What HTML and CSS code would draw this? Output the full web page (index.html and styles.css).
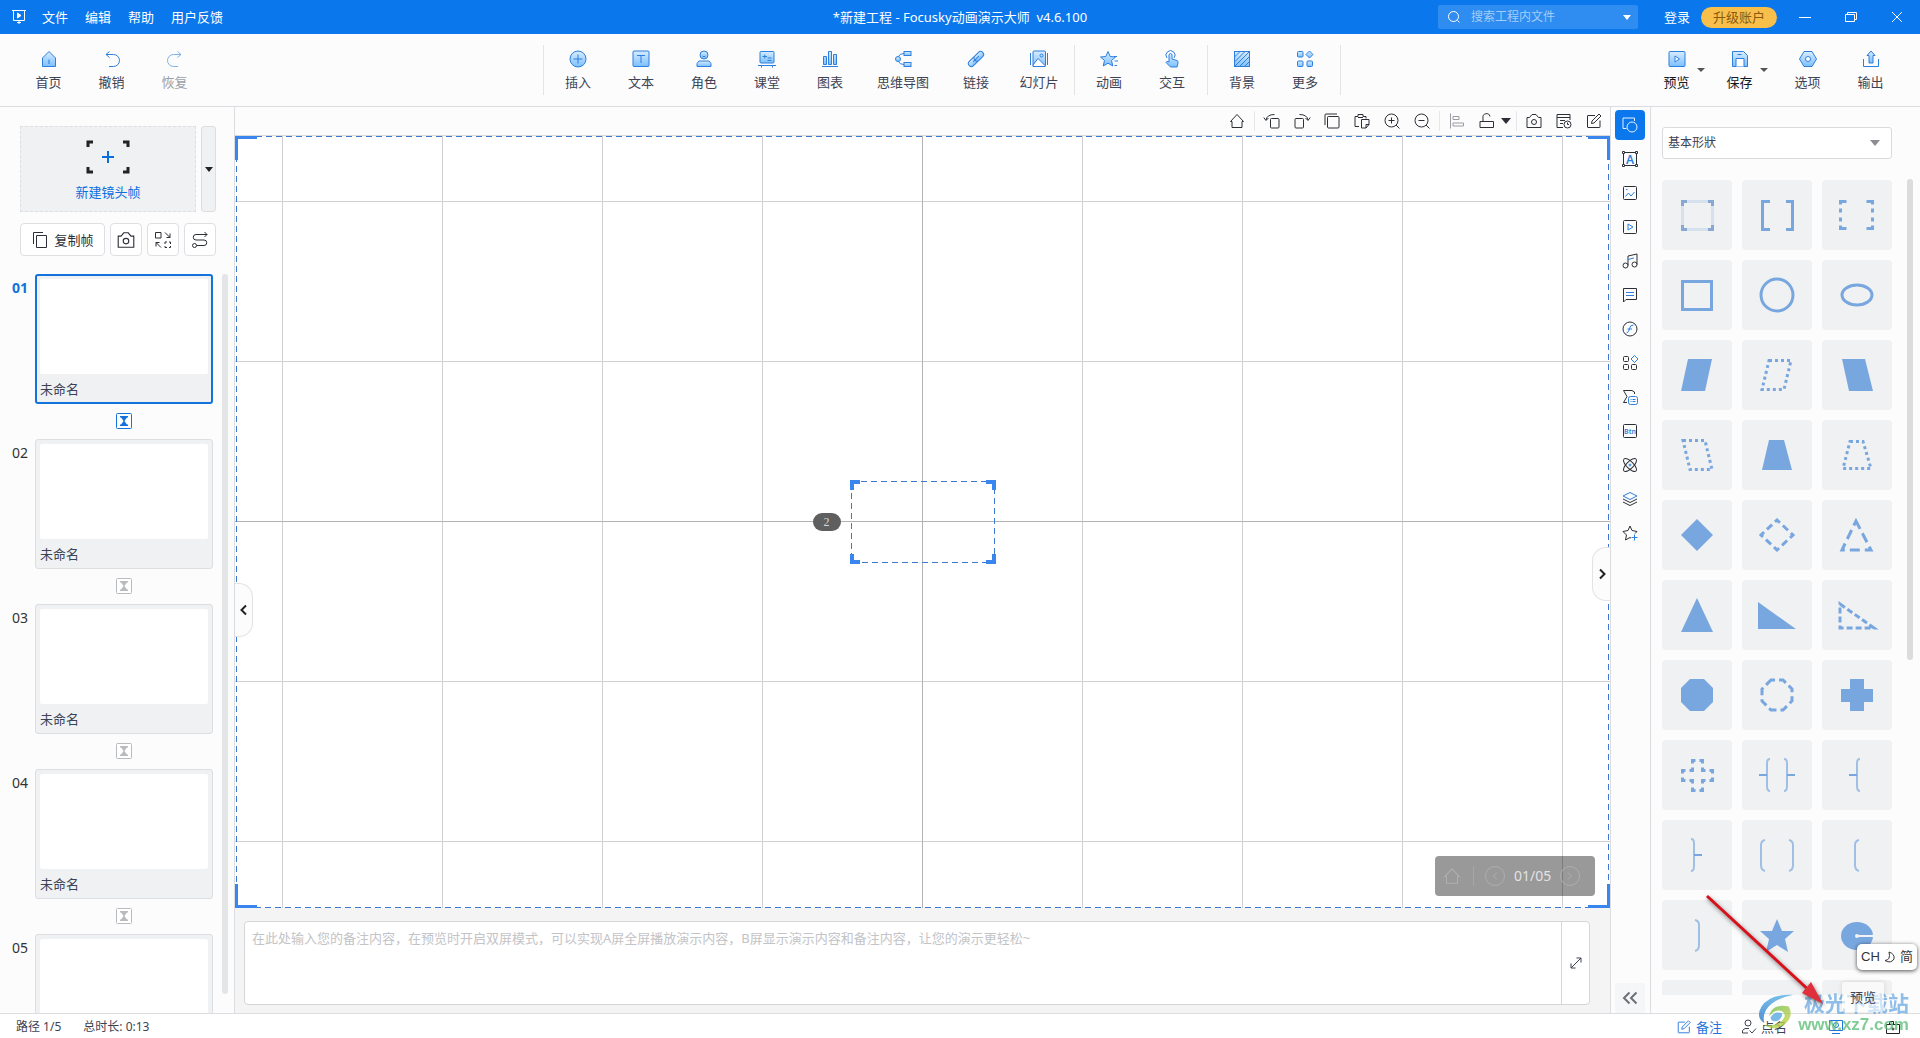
FILE: index.html
```html
<!DOCTYPE html>
<html lang="zh-CN">
<head>
<meta charset="utf-8">
<title>新建工程 - Focusky动画演示大师</title>
<link rel="stylesheet" href="styles.css">
</head>
<body>
<svg class="sprite" aria-hidden="true">
  <defs>
    <linearGradient id="g" x1="0" y1="0" x2="0" y2="1"><stop offset="0" stop-color="#d8ecff"/><stop offset="1" stop-color="#7cc0ff"/></linearGradient>
    <linearGradient id="wm" x1="0" y1="0" x2="0" y2="1"><stop offset="0" stop-color="#56b0e8"/><stop offset="1" stop-color="#2b74c4"/></linearGradient>
    <linearGradient id="wg" x1="0" y1="0" x2="1" y2="1"><stop offset="0" stop-color="#62bd4f"/><stop offset="1" stop-color="#d8d94a"/></linearGradient>
  </defs>
  <symbol id="camera" viewBox="0 0 18 18"><path d="M2 5.500H4.500L7 2.500H11L13.500 5.500H16V15.500H2Z"/><circle cx="9" cy="10" r="2.500"/></symbol>
  <symbol id="house" viewBox="0 0 18 18"><path d="M2.500 9.500H4V15.500H14V9.500H15.500L9 2.500Z"/></symbol>
  <symbol id="edit" viewBox="0 0 18 18"><path d="M10 3.500H3Q2.500 3.500 2.500 4V15Q2.500 15.500 3 15.500H14.500Q15 15.500 15 15V8.500M6.500 11.500L7 9L14 2L16 4L9 11Z"/></symbol>
  <symbol id="hour" viewBox="0 0 16 16"><rect x=".5" y=".5" width="15" height="15" rx="1" fill="#fff"/><path class="solid" d="M4 3H12V4.500H11L8.700 7.500V8.500L11 11.500H12V13H4V11.500H5L7.300 8.500V7.500L5 4.500H4Z" stroke="none"/></symbol>
</svg>

<div class="app">
  <header class="titlebar">
    <nav class="menu">
      <svg class="i16" viewBox="0 0 16 16"><path d="M1 1.500H15M2.500 1.500V11.500H13.500V1.500M8 11.500V15M6 13.500H10"/><path d="M6.500 4L10 6.500L6.500 9Z" fill="#fff"/></svg>
      <button>文件</button><button>编辑</button><button>帮助</button><button>用户反馈</button>
    </nav>
    <h1>*新建工程 - Focusky动画演示大师&nbsp; v4.6.100</h1>
    <div class="account">
      <label class="search">
        <svg class="i14" viewBox="0 0 14 14"><circle cx="6.500" cy="6.500" r="5"/><path d="M10.500 10.500L12.500 12.500"/></svg>
        <input type="text" placeholder="搜索工程内文件" aria-label="搜索">
        <span class="caret"></span>
      </label>
      <button class="login">登录</button>
      <button class="upgrade">升级账户</button>
      <button class="win" aria-label="最小化"><svg class="i12" viewBox="0 0 12 12"><path d="M0 6.500H12"/></svg></button>
      <button class="win" aria-label="还原"><svg class="i12" viewBox="0 0 12 12"><path d="M.5 3.500H9.500V10.500H.5ZM2.500 3.500V1.500H11.500V8.500H9.500"/></svg></button>
      <button class="win" aria-label="关闭"><svg class="i12" viewBox="0 0 12 12"><path d="M1 1L11 11M11 1L1 11"/></svg></button>
    </div>
  </header>

  <div class="toolbar">
    <div class="tools left">
      <button><svg viewBox="0 0 18 18"><path class="f" d="M2.500 16.500V8L9 1.500L15.500 8V16.500Z"/><path d="M9 9.500V14"/></svg>首页</button>
      <button><svg viewBox="0 0 18 18"><path d="M6.500 1.500L3 4.500L6.500 7.500M3 4.500H10.500A5.500 5.500 0 0 1 10.500 16.500H6" /></svg>撤销</button>
      <button class="off" disabled><svg viewBox="0 0 18 18"><path d="M11.500 1.500L15 4.500L11.500 7.500M15 4.500H7.500A5.500 5.500 0 0 0 7.500 16.500H12"/></svg>恢复</button>
    </div>
    <div class="tools mid">
      <div class="group">
        <button><svg viewBox="0 0 18 18"><circle class="f" cx="9" cy="9" r="8"/><path d="M9 4.500V13.500M4.500 9H13.500"/></svg>插入</button>
        <button><svg viewBox="0 0 18 18"><rect class="f" x="1" y="1" width="16" height="15.500" rx="1"/><path d="M5 5.500H13M9 5.500V13"/></svg>文本</button>
        <button><svg viewBox="0 0 18 18"><circle class="f" cx="9" cy="5" r="4"/><path d="M7.500 6Q9 7.500 10.500 6"/><path class="f" d="M2 16.500V13.500L4 11H14L16 13.500V16.500Z"/></svg>角色</button>
        <button><svg viewBox="0 0 18 18"><rect class="f" x="2" y="1.500" width="14" height="11.500" rx="1"/><path d="M0 15.500H18M3.500 15.500V17.500M14.500 15.500V17.500M4.500 6.500H9M6.750 4.500V8.500M9.500 8H13.500M9.500 10.500H13.500"/></svg>课堂</button>
        <button><svg viewBox="0 0 18 18"><path class="f" d="M2.500 6.500H5.500V14.500H2.500ZM7.500 1.500H10.500V14.500H7.500ZM12.500 4.500H15.500V14.500H12.500Z"/><path d="M1 16.500H17"/></svg>图表</button>
        <button class="wide"><svg viewBox="0 0 18 18"><circle class="f" cx="4" cy="9" r="2.500"/><path d="M4.500 6.500Q5.500 3.500 10 3.500M4.500 11.500Q5.500 14.500 10 14.500"/><rect class="f" x="10" y="1.500" width="7" height="4"/><rect class="f" x="10" y="12.500" width="7" height="4"/></svg>思维导图</button>
        <button><svg viewBox="0 0 18 18"><g transform="rotate(-45 9 9)"><rect class="f" x="-.5" y="6" width="11" height="6" rx="3"/><rect class="f" x="7.500" y="6" width="11" height="6" rx="3"/><path d="M5 9H13"/></g></svg>链接</button>
        <button><svg viewBox="0 0 18 18"><rect class="f" x="3" y="1" width="12.500" height="15.500" rx="1"/><path d="M.5 3V15M17.500 3V15"/><circle cx="11.500" cy="5.500" r="1.500"/><path d="M3 15L8 8.500L15 15.500V16.500H3Z" fill="#fff"/></svg>幻灯片</button>
      </div>
      <div class="group">
        <button><svg viewBox="0 0 18 18"><path class="f" d="M8 1.500L10.200 6.500L15.500 7L11.500 10.500L12.800 16L8 13.200L3.200 16L4.500 10.500L.5 7L5.800 6.500Z"/><path d="M14 6.500H17M14.500 11H18M14.500 15.500H17"/></svg>动画</button>
        <button><svg viewBox="0 0 18 18"><path d="M4 8A4.500 4.500 0 1 1 11 8"/><path class="f" d="M6 12V4.500Q7.500 2.500 9 4.500V9L14 10.500Q15.500 11 15 13L14 17H7.500L3 12.500Q3.500 10.500 6 12Z"/></svg>交互</button>
      </div>
      <div class="group">
        <button><svg viewBox="0 0 18 18"><rect class="f" x="1.500" y="1.500" width="15" height="15"/><path d="M1.500 7L7 1.500M1.500 12L12 1.500M2 16L16 2M6.500 16.500L16.500 6.500M11.500 16.500L16.500 11.500"/></svg>背景</button>
        <button><svg viewBox="0 0 18 18"><rect class="f" x="1.500" y="1.500" width="5.500" height="5.500" rx="1"/><path class="f" d="M13.500 1L17 4.500L13.500 8L10 4.500Z"/><rect class="f" x="1.500" y="11" width="5.500" height="5.500" rx="1"/><rect class="f" x="11" y="11" width="5.500" height="5.500" rx="1"/></svg>更多</button>
      </div>
    </div>
    <div class="tools right">
      <button class="dark drop"><svg viewBox="0 0 18 18"><rect class="f" x="1" y="1.500" width="16" height="15" rx="1"/><path d="M7 6L11.500 9L7 12Z" fill="#fff"/></svg>预览</button>
      <button class="dark drop"><svg viewBox="0 0 18 18"><path class="f" d="M1.500 1.500H12.500L16.500 5.500V16.500H1.500Z"/><path d="M5 16.500V8.500H13V16.500M6.500 4.500H10.500" fill="#fff"/></svg>保存</button>
      <button class="gap"><svg viewBox="0 0 18 18"><path class="f" d="M5 1.500H13L17.500 9L13 16.500H5L.5 9Z"/><circle cx="9" cy="9" r="2.500" fill="#fff"/></svg>选项</button>
      <button><svg viewBox="0 0 18 18"><path d="M1.500 9V16.500H16.500V9"/><path class="f" d="M9 1L13 5.500H11V13H7V5.500H5Z"/></svg>输出</button>
    </div>
  </div>

  <div class="work">
    <aside class="frames">
      <div class="newrow">
        <button class="newframe">
          <svg viewBox="0 0 44 34"><path d="M2 7V2H7M37 2H42V7M42 27V32H37M7 32H2V27" stroke="#222" stroke-width="3"/><path d="M22 11V23M16 17H28" stroke="#0b6fe0" stroke-width="2"/></svg>
          新建镜头帧
        </button>
        <button class="newmore" aria-label="更多镜头帧"><span class="caret"></span></button>
      </div>
      <div class="acts">
        <button class="copy"><svg class="i18" viewBox="0 0 18 18"><path d="M5.500 4.500H15.500V16.500H5.500ZM2.500 13V1.500H12"/></svg>复制帧</button>
        <button aria-label="截图"><svg class="i20"><use href="#camera"/></svg></button>
        <button aria-label="替换"><svg class="i18" viewBox="0 0 18 18"><path d="M1.500 1.500H7V7H1.500ZM11 1.500L16 6.500M16 2.500V6.500H12.500M7 16.500L2 11.500M2 15.500V11.500H5.500M11 13V11H13M15 11H16.500V13M16.500 15V16.500H15M13 16.500H11V15"/></svg></button>
        <button aria-label="路径"><svg class="i18" viewBox="0 0 18 18"><path d="M13.500 1L16 3.500L13.500 6M16 3.500H5A2.750 2.750 0 0 0 5 9H13A2.750 2.750 0 0 1 13 14.500H5.500"/><circle cx="3.500" cy="14.500" r="2"/></svg></button>
      </div>
      <div class="scroller">
        <ol>
          <li class="on"><b>01</b><div class="card"><i></i>未命名</div><svg class="hour"><use href="#hour"/></svg></li>
          <li><b>02</b><div class="card"><i></i>未命名</div><svg class="hour"><use href="#hour"/></svg></li>
          <li><b>03</b><div class="card"><i></i>未命名</div><svg class="hour"><use href="#hour"/></svg></li>
          <li><b>04</b><div class="card"><i></i>未命名</div><svg class="hour"><use href="#hour"/></svg></li>
          <li><b>05</b><div class="card"><i></i></div></li>
        </ol>
        <span class="bar"></span>
      </div>
    </aside>

    <main class="center">
      <div class="subbar">
        <button aria-label="主页"><svg class="i18"><use href="#house"/></svg></button><hr>
        <button aria-label="左转"><svg class="i18" viewBox="0 0 18 18"><rect x="7.500" y="6.500" width="8.500" height="9.500" rx="1"/><path d="M11.500 2.500Q4 2.500 3 8M.8 5.500L3 8.500L5.500 6"/></svg></button>
        <button aria-label="右转"><svg class="i18" viewBox="0 0 18 18"><rect x="2" y="6.500" width="8.500" height="9.500" rx="1"/><path d="M6.500 2.500Q14 2.500 15 8M17.200 5.500L15 8.500L12.500 6"/></svg></button>
        <button aria-label="复制"><svg class="i18" viewBox="0 0 18 18"><rect x="4.500" y="4.500" width="11.500" height="11.500" rx="1"/><path d="M2 13V3Q2 2 3 2H14"/></svg></button>
        <button aria-label="粘贴"><svg class="i18" viewBox="0 0 18 18"><path d="M6 14.500H2V4.500H5V2.500H10V4.500H13V6.500M5 5.500H10M8.500 7.500H16V12.500L13 16H8.500ZM16 12.500H13V16"/></svg></button>
        <button aria-label="放大"><svg class="i18" viewBox="0 0 18 18"><circle cx="8.500" cy="8.500" r="6.500"/><path d="M13 13L16.500 16.500M8.500 5.500V11.500M5.500 8.500H11.500"/></svg></button>
        <button aria-label="缩小"><svg class="i18" viewBox="0 0 18 18"><circle cx="8.500" cy="8.500" r="6.500"/><path d="M13 13L16.500 16.500M5.500 8.500H11.500"/></svg></button><hr>
        <button aria-label="对齐" class="dim"><svg class="i18" viewBox="0 0 18 18"><path d="M2.500 1.500V16.500M5 4.500H11V7.500H5ZM5 11H15.500V14H5Z"/></svg></button>
        <button aria-label="锁定"><svg class="i18" viewBox="0 0 18 18"><path d="M2 9.500H15.500V15.500H2ZM5 9.500V6A3.500 3.500 0 0 1 12 4.500"/></svg></button>
        <span class="caret"></span><hr>
        <button aria-label="截图"><svg class="i18"><use href="#camera"/></svg></button>
        <button aria-label="历史"><svg class="i18" viewBox="0 0 18 18"><path d="M8 15.500H2V2.500H15V8M2 5.500H15M5 8.500H10M5 11.500H8"/><circle cx="12.500" cy="12.500" r="3.500"/><path d="M12.500 10.500V12.500H14"/></svg></button>
        <button aria-label="编辑"><svg class="i18"><use href="#edit"/></svg></button>
      </div>

      <div class="canvas">
        <svg class="outline big"><rect x="1" y="0" width="100%" height="100%"/>
          <path d="M1.500 24V1.500H22"/><svg x="100%" overflow="visible"><path d="M-22 1.500H-1.500V24"/></svg>
          <svg y="100%" overflow="visible"><path d="M1.500 -24V-1.500H22"/></svg><svg x="100%" y="100%" overflow="visible"><path d="M-22 -1.500H-1.500V-24"/></svg></svg>
        <div class="shot">
          <svg class="outline"><rect x="1" y="1" width="100%" height="100%"/>
            <path d="M2 10V2H10"/><svg x="100%" overflow="visible"><path d="M-10 2H-2V10"/></svg>
            <svg y="100%" overflow="visible"><path d="M2 -10V-2H10"/></svg><svg x="100%" y="100%" overflow="visible"><path d="M-10 -2H-2V-10"/></svg></svg>
          <span class="badge">2</span>
        </div>
        <button class="tab tl" aria-label="收起左侧"><svg class="i12" viewBox="0 0 12 12"><path d="M8 1.500L3.500 6L8 10.500"/></svg></button>
        <button class="tab tr" aria-label="收起右侧"><svg class="i12" viewBox="0 0 12 12"><path d="M4 1.500L8.500 6L4 10.500"/></svg></button>
        <div class="pager">
          <svg class="i20"><use href="#house"/></svg><hr>
          <svg class="i20" viewBox="0 0 20 20"><circle cx="10" cy="10" r="9.500"/><path d="M12 6.500L8.500 10L12 13.500"/></svg>
          <span>01/05</span>
          <svg class="i20" viewBox="0 0 20 20"><circle cx="10" cy="10" r="9.500"/><path d="M8 6.500L11.500 10L8 13.500"/></svg>
        </div>
      </div>

      <div class="notes">
        <div class="notebox">
          <textarea aria-label="备注" placeholder="在此处输入您的备注内容，在预览时开启双屏模式，可以实现A屏全屏播放演示内容，B屏显示演示内容和备注内容，让您的演示更轻松~"></textarea>
          <button aria-label="展开"><svg class="i12" viewBox="0 0 12 12"><path d="M1 11L11 1M6.500 1H11V5.500M1 6.500V11H5.500"/></svg></button>
        </div>
      </div>
    </main>

    <nav class="rail">
      <button class="on" aria-label="形状"><svg viewBox="0 0 18 18"><path d="M5.500 12.500H2V2H13.500V5"/><circle cx="11" cy="11" r="5"/></svg></button>
      <button aria-label="文本"><svg viewBox="0 0 18 18"><path d="M3.500 2.500H14.500M3.500 15.500H14.500M2.500 3.500V14.500M15.500 3.500V14.500"/><path d="M1.500 1.500H3.500V3.500H1.500ZM14.500 1.500H16.500V3.500H14.500ZM1.500 14.500H3.500V16.500H1.500ZM14.500 14.500H16.500V16.500H14.500Z"/><text x="9" y="13.500" font-size="12">A</text></svg></button>
      <button aria-label="图片"><svg viewBox="0 0 18 18"><rect x="2.500" y="2.500" width="13" height="13" rx="1"/><path class="b" d="M4.500 12.500L7.500 9L10 12L13.500 8M5 5.500H6.500"/></svg></button>
      <button aria-label="视频"><svg viewBox="0 0 18 18"><rect x="2.500" y="2.500" width="13" height="13" rx="1"/><path class="b" d="M7 6L12 9L7 12Z"/></svg></button>
      <button aria-label="音乐"><svg viewBox="0 0 18 18"><circle cx="4.500" cy="13.500" r="2.500"/><circle cx="13.500" cy="12.500" r="2.500"/><path d="M7 13.500V4L16 2V12.500"/><path class="b" d="M7 7.500L13 6"/></svg></button>
      <button aria-label="字幕"><svg viewBox="0 0 18 18"><path d="M2.500 16V2.500H15.500V13.500H5Z"/><path class="b" d="M5 6.500H13M5 9.500H13"/></svg></button>
      <button aria-label="动画"><svg viewBox="0 0 18 18"><circle cx="9" cy="9" r="7"/><path class="b" d="M12.500 5Q9 5 8.500 8.500Q8 12.500 5.500 13M6.500 9H11"/></svg></button>
      <button aria-label="组件"><svg viewBox="0 0 18 18"><rect x="2.500" y="2.500" width="5" height="5" rx="1"/><rect x="2.500" y="10.500" width="5" height="5" rx="1"/><rect x="10.500" y="10.500" width="5" height="5" rx="1"/><path class="b" d="M13.500 1.500L17 5L13.500 8.500L10 5Z"/></svg></button>
      <button aria-label="公式"><svg viewBox="0 0 18 18"><path d="M13.500 6V4L11 2.500H2.500L6 8.500L2.500 14.500H6"/><rect class="b" x="7.500" y="8.500" width="9" height="8" rx="2"/><path class="b" d="M9.500 11.500H10.500M11.500 11.500H14.500M9.500 13.500H10.500M11.500 13.500H14.500"/></svg></button>
      <button aria-label="按钮"><svg viewBox="0 0 18 18"><rect x="2.500" y="2.500" width="13" height="13" rx="1"/><text x="9" y="12" font-size="7">Btn</text></svg></button>
      <button aria-label="特效"><svg viewBox="0 0 18 18"><ellipse cx="9" cy="9" rx="8.500" ry="3.500" transform="rotate(45 9 9)"/><ellipse cx="9" cy="9" rx="8.500" ry="3.500" transform="rotate(-45 9 9)"/><circle class="b" cx="9" cy="9" r="1"/></svg></button>
      <button aria-label="图层"><svg viewBox="0 0 18 18"><path class="b" d="M9 2.500L16 6L9 9.500L2 6Z"/><path d="M2 9L9 12.500L16 9M2 12L9 15.500L16 12"/></svg></button>
      <button aria-label="收藏"><svg viewBox="0 0 18 18"><path d="M10 14L9 13.500L4.500 16L5.500 11L2 7.500L7 6.500L9 2L11 6.500L16 7.500L14 9.500"/><path class="b" d="M13.500 10.500V16.500M10.500 13.500H16.500"/></svg></button>
      <button class="fold" aria-label="收起"><svg viewBox="0 0 18 18"><path d="M8.500 3.500L3 9L8.500 14.500M15.500 3.500L10 9L15.500 14.500"/></svg></button>
    </nav>

    <aside class="panel">
      <div class="pick"><select aria-label="形状分类"><option>基本形狀</option></select><span class="caret"></span></div>
      <div class="shapes">
        <button><svg viewBox="0 0 70 70"><rect x="20.500" y="21.500" width="30" height="28" stroke="#d6e1ee"/><path d="M20.500 26V21.500H25M46 21.500H50.500V26M50.500 45V49.500H46M25 49.500H20.500V45" stroke="#86a8d2"/></svg></button>
        <button><svg viewBox="0 0 70 70"><path d="M28 21.500H20.500V49.500H28M44 21.500H50.500V49.500H44"/></svg></button>
        <button><svg viewBox="0 0 70 70"><path class="c" d="M24.500 21.500H18.500V48.500H24.500M44.500 21.500H50.500V48.500H44.500"/></svg></button>
        <button><svg viewBox="0 0 70 70"><rect x="20.500" y="21.500" width="29" height="28"/></svg></button>
        <button><svg viewBox="0 0 70 70"><circle cx="35" cy="35" r="16"/></svg></button>
        <button><svg viewBox="0 0 70 70"><ellipse cx="35" cy="35" rx="15" ry="10"/></svg></button>
        <button><svg viewBox="0 0 70 70"><path class="s" d="M26 19H50L43 51H19Z"/></svg></button>
        <button><svg viewBox="0 0 70 70"><path class="t" d="M27 20.500H49L42 49.500H20Z"/></svg></button>
        <button><svg viewBox="0 0 70 70"><path class="s" d="M20 19H43L51 51H27Z"/></svg></button>
        <button><svg viewBox="0 0 70 70"><path class="t" d="M21 20.500H43L50 49.500H28Z"/></svg></button>
        <button><svg viewBox="0 0 70 70"><path class="s" d="M27 20H42L50 50H20Z"/></svg></button>
        <button><svg viewBox="0 0 70 70"><path class="t" d="M28 21.500H41L49 48.500H21Z"/></svg></button>
        <button><svg viewBox="0 0 70 70"><path class="s" d="M35 19L51 35L35 51L19 35Z"/></svg></button>
        <button><svg viewBox="0 0 70 70"><path class="q" d="M35 20L51 35L35 50L19 35Z"/></svg></button>
        <button><svg viewBox="0 0 70 70"><path class="w" d="M34 21L20 50H49Z"/></svg></button>
        <button><svg viewBox="0 0 70 70"><path class="s" d="M35 18L51 52H19Z"/></svg></button>
        <button><svg viewBox="0 0 70 70"><path class="s" d="M16 22L54 49H16Z"/></svg></button>
        <button><svg viewBox="0 0 70 70"><path class="d" d="M18 24L52 48H18Z"/></svg></button>
        <button><svg viewBox="0 0 70 70"><path class="s" d="M28 19H42L51 28V42L42 51H28L19 42V28Z"/></svg></button>
        <button><svg viewBox="0 0 70 70"><path class="o" d="M29 20H41L50 29V41L41 50H29L20 41V29Z"/></svg></button>
        <button><svg viewBox="0 0 70 70"><path class="s" d="M28 19H42V29H51V42H42V51H28V42H19V29H28Z"/></svg></button>
        <button><svg viewBox="0 0 70 70"><path class="p" d="M30.500 20.500H40.500V30.500H50.500V40.500H40.500V50.500H30.500V40.500H20.500V30.500H30.500Z"/></svg></button>
        <button><svg viewBox="0 0 70 70"><path class="n" d="M28 19Q25 19 25 23V46Q25 51 28 51M42 19Q45 19 45 23V46Q45 51 42 51"/><path class="m" d="M17 35H25M45 35H53"/></svg></button>
        <button><svg viewBox="0 0 70 70"><path class="n" d="M38 19Q35 19 35 23V46Q35 51 38 51"/><path class="m" d="M27 35H35"/></svg></button>
        <button><svg viewBox="0 0 70 70"><path class="n" d="M29 19Q32 19 32 23V46Q32 51 29 51"/><path class="m" d="M32 35H40"/></svg></button>
        <button><svg viewBox="0 0 70 70"><path class="n" d="M23 20Q19 21 19 25V45Q19 50 23 51M47 20Q51 21 51 25V45Q51 50 47 51"/></svg></button>
        <button><svg viewBox="0 0 70 70"><path class="n" d="M37 20Q33 21 33 25V45Q33 50 37 51"/></svg></button>
        <button><svg viewBox="0 0 70 70"><path class="n" d="M33 20Q37 21 37 25V45Q37 50 33 51"/></svg></button>
        <button><svg viewBox="0 0 70 70"><path class="s" d="M35 19L40 31H52L43 39L46 52L35 45L24 52L27 39L18 31H30Z"/></svg></button>
        <button><svg viewBox="0 0 70 70"><ellipse class="s" cx="35" cy="36" rx="16" ry="14"/><path d="M35 36H52" stroke="#f2f3f5" stroke-width="2"/><circle cx="35" cy="36" r="2" fill="#f2f3f5" stroke="none"/></svg></button>
        <button aria-label="形状"></button><button aria-label="形状"></button><button aria-label="形状"></button>
      </div>
      <span class="bar"></span>
    </aside>
  </div>

  <footer class="status">
    <span>路径 1/5</span><span>总时长: 0:13</span>
    <div class="right">
      <button class="blue"><svg class="i16" viewBox="0 0 18 18"><use href="#edit"/></svg>备注</button>
      <button class="roll"><svg class="i16" viewBox="0 0 16 16"><circle cx="7" cy="4" r="3"/><path d="M1.500 14V11.500L4 9.500H8M1.500 14H7M8.500 11.500L11 14L15 9.500"/></svg>点名</button>
      <button class="blue screen" aria-label="投屏"><svg class="i16" viewBox="0 0 16 16"><path d="M1.500 1.500H14.500V11.500H1.500ZM4 14.500H12"/><circle cx="8" cy="6" r="2.500"/></svg></button>
      <button class="lock" aria-label="锁定"><svg class="i16" viewBox="0 0 16 16"><path d="M1.500 5.500H14.500V14.500H1.500ZM4.500 5.500V2.500H8.500V5.500"/><circle cx="8" cy="10" r="1"/></svg></button>
    </div>
  </footer>

  <div class="watermark">
    <svg class="swirl" viewBox="0 0 44 44"><path d="M40 3Q14 2 5 16Q-2 28 8 34Q5 22 16 13Q25 6 40 3Z" fill="url(#wm)"/><path d="M35 16Q16 12 13 27Q20 18 27 21Q34 25 27 32Q20 38 7 36Q18 44 30 36Q41 27 35 16Z" fill="url(#wg)"/><path d="M28 24Q20 20 15 28Q15 33 22 32Q27 30 28 24Z" fill="#5aa9e0"/></svg>
    <div><strong>极光下载站</strong><em>www.xz7.com</em></div>
  </div>
  <div class="tip">预览</div>
  <svg class="arrow" viewBox="0 0 124 116"><path d="M2 2L108 100" stroke-width="3"/><path d="M118 110L97 99L106 88Z" fill="#e0303c" stroke="none"/></svg>
  <div class="ime"><span>CH</span><svg class="i12" viewBox="0 0 12 12"><path d="M5 1Q11 3 10 8Q7 13 1 9.500Q7 9 5 1Z"/></svg><span>简</span></div>
</div>
</body>
</html>
```
FILE: styles.css
```css
* { box-sizing: border-box; }
body { margin: 0; font: 13px/18px "Noto Sans", "Noto Sans CJK SC", sans-serif; color: #3d4354; }
button, input, textarea, select { font: inherit; color: inherit; border: 0; background: none; padding: 0; margin: 0; outline: 0; }
button { display: flex; align-items: center; justify-content: center; white-space: nowrap; }
svg { fill: none; stroke: currentColor; flex: none; display: block; }
hr { border: 0; margin: 0; flex: none; }
.sprite { position: absolute; width: 0; height: 0; }
.i12 { width: 12px; height: 12px; }
.i14 { width: 14px; height: 14px; }
.i16 { width: 16px; height: 16px; }
.i18 { width: 18px; height: 18px; }
.i20 { width: 20px; height: 20px; }
.caret { flex: none; border: 4px solid transparent; border-top: 5px solid currentColor; border-bottom: 0; width: 8px; height: 5px; }

.app { position: relative; display: flex; flex-direction: column; height: 100vh; overflow: hidden; background: #fcfcfc; }

.titlebar { flex: none; display: grid; grid-template-columns: 1fr auto 1fr; align-items: center; height: 34px; background: #0a77ec; color: #fff; }
.titlebar h1 { margin: 0; font-size: 13px; font-weight: 400; }
.menu { display: flex; align-items: center; padding-left: 11px; }
.menu button { margin-left: 17px; }
.menu svg + button { margin-left: 15px; }
.account { display: flex; align-items: center; justify-content: flex-end; padding-right: 17px; }
.search { display: flex; align-items: center; gap: 10px; width: 200px; height: 24px; padding: 0 7px 0 9px; border-radius: 2px; background: #2f8cf0; }
.search input { flex: 1; min-width: 0; font-size: 12px; }
.search input::placeholder { color: #a3cdf9; opacity: 1; }
.login { margin: 0 11px 0 26px; }
.upgrade { width: 76px; height: 21px; border-radius: 11px; background: #f8c04b; color: #8a5a10; margin-right: 22px; }
.win + .win { margin-left: 34px; }

.toolbar { flex: none; display: grid; grid-template-columns: 543fr auto 580fr; height: 73px; border-bottom: 1px solid #dcdde0; }
.tools { display: flex; align-items: flex-start; padding-top: 11px; }
.tools button { position: relative; flex-direction: column; gap: 5px; width: 63px; padding-top: 5px; }
.tools .wide { width: 83px; }
.tools svg { width: 18px; height: 18px; color: #2d7fdb; }
.f { fill: url(#g); }
.left { padding-left: 17px; }
.tools .off { color: #9da0a8; }
.off svg { opacity: .6; }
.group { display: flex; align-items: flex-start; height: 50px; padding: 0 3px; border-left: 1px solid #e3e4e6; }
.group:last-child { border-right: 1px solid #e3e4e6; }
.right { display: flex; justify-content: flex-end; }
.tools.right { padding-right: 18px; }
.tools .dark { color: #15181f; }
.drop::after { content: ""; position: absolute; right: 3px; top: 23px; border: 4px solid transparent; border-top-color: #555; border-bottom: 0; }
.tools .gap { margin-left: 5px; }

.work { flex: 1; min-height: 0; display: grid; grid-template-columns: 235px minmax(0, 1fr) 41px 269px; }

.frames { display: flex; flex-direction: column; min-height: 0; padding-top: 19px; border-right: 1px solid #dcdde0; }
.newrow { display: flex; gap: 5px; padding: 0 18px 0 20px; }
.newframe { flex: 1; flex-direction: column; gap: 9px; height: 86px; border: 1px dashed #dcdee1; background: #f0f1f3; color: #0b6fe0; padding-top: 3px; }
.newframe svg { width: 44px; height: 34px; }
.newmore { width: 15px; border: 1px solid #dcdee1; border-radius: 3px; background: #f0f1f3; color: #222; }
.acts { display: flex; gap: 5px; padding: 11px 18px 18px 20px; color: #2c2f36; }
.acts button { width: 32px; height: 33px; border: 1px solid #dedfe2; border-radius: 4px; background: #fff; }
.acts .copy { flex: 1; gap: 5px; }
.scroller { flex: 1; min-height: 0; display: flex; justify-content: space-between; overflow: hidden; padding-right: 6px; }
.scroller ol { margin: 0; padding: 0 0 0 12px; list-style: none; }
.scroller li { display: grid; grid-template-columns: 23px 178px; height: 165px; grid-template-rows: 130px 35px; }
.scroller b { font-size: 14px; font-weight: 400; padding-top: 5px; color: #333; }
.card { padding: 4px; border: 1px solid #dcdee1; border-radius: 3px; background: #f0f1f3; line-height: 31px; text-indent: 2px; }
.card i { display: block; height: 95px; background: #fff; border-radius: 2px; }
.on b { font-weight: 700; color: #1472dc; }
.on .card { border: 2px solid #1472dc; padding: 3px; }
.hour { grid-column: 2; justify-self: center; width: 16px; height: 16px; margin-top: 9px; color: #b9bbbf; }
.on .hour { color: #1472dc; }
.solid { fill: currentColor; }
.bar { width: 6px; border-radius: 3px; background: #e4e5e6; margin-bottom: 19px; }

.center { display: flex; flex-direction: column; min-width: 0; min-height: 0; background: #f4f4f5; }
.subbar { flex: none; display: flex; align-items: center; justify-content: flex-end; gap: 12px; height: 29px; padding-right: 7px; background: #fcfcfc; border-bottom: 1px solid #d8d9dc; color: #2c2f36; }
.subbar hr { width: 1px; height: 20px; background: #e6e7e9; margin: 0 -4px; }
.subbar .caret { margin: 0 -3px 0 -7px; border-width: 6px 5px 0; width: 10px; height: 6px; }
.dim { color: #9a9ca1; }
.canvas { position: relative; flex: 1; overflow: hidden; background: #fff; }
.canvas::before {
  content: ""; position: absolute; left: calc(50% - 1601px); top: calc(50% - 1601px); width: 3200px; height: 3200px;
  background:
    linear-gradient(#b2b2b2, #b2b2b2) 1600px 0 / 1px 100% no-repeat,
    linear-gradient(#b2b2b2, #b2b2b2) 0 1600px / 100% 1px no-repeat,
    linear-gradient(90deg, #d0d1d2 1px, transparent 1px) 0 0 / 160px 160px,
    linear-gradient(#d0d1d2 1px, transparent 1px) 0 0 / 160px 160px;
}
.outline { position: relative; width: 100%; height: 100%; overflow: hidden; color: #3a85ee; stroke-width: 4; shape-rendering: crispEdges; }
.outline rect { stroke: #3f78cf; stroke-width: 1; stroke-dasharray: 6 4; width: calc(100% - 3px); height: calc(100% - 3px); }
.big { stroke-width: 3; }
.big rect { height: calc(100% - 1px); }
.shot { position: absolute; left: 50%; top: 50%; width: 146px; height: 84px; margin: -42px 0 0 -73px; }
.badge { position: absolute; left: -37px; top: 33px; width: 28px; height: 18px; border-radius: 9px; background: #5f5f5f; color: #d8d8d8; font: 12px/18px "Liberation Serif", serif; text-align: center; }
.tab { position: absolute; width: 18px; height: 54px; background: #fcfcfc; border: 1px solid #e2e3e5; color: #222; stroke-width: 2; }
.tl { left: 0; top: 447px; border-left: 0; border-radius: 0 14px 14px 0; }
.tr { right: 0; top: 411px; border-right: 0; border-radius: 14px 0 0 14px; }
.pager { position: absolute; right: 15px; bottom: 12px; display: flex; align-items: center; gap: 9px; width: 160px; height: 40px; padding: 0 7px; border-radius: 4px; background: rgba(0, 0, 0, .4); color: #aeaeae; }
.pager hr { width: 1px; height: 20px; background: #a8a8a8; margin: 0 2px; }
.pager span { color: #e2e2e2; font-size: 14px; }
.notes { flex: none; height: 105px; padding: 13px 20px 8px 9px; }
.notebox { display: flex; height: 84px; border: 1px solid #d5d6d9; border-radius: 4px; background: #fff; }
.notebox textarea { flex: 1; resize: none; padding: 7px; line-height: 18px; }
.notebox textarea::placeholder { color: #c3c4c7; opacity: 1; }
.notebox button { width: 28px; border-left: 1px solid #d5d6d9; }

.rail { display: flex; flex-direction: column; align-items: center; padding-top: 3px; border: solid #dcdde0; border-width: 0 1px; color: #2c2f36; }
.rail button { width: 30px; height: 30px; border-radius: 4px; margin-bottom: 4px; }
.rail { align-items: flex-start; padding-left: 4px; }
.rail svg { width: 18px; height: 18px; }
.rail .on { background: #0a77ec; color: #e4f1ff; }
.rail .b { stroke: #2b7fe0; }
.rail text { fill: #2b7fe0; stroke: none; text-anchor: middle; font-weight: 600; }
.rail .fold { margin: auto 0 0; background: #f5f6f7; color: #6d7178; stroke-width: 2; border-radius: 0; }

.panel { position: relative; min-height: 0; padding: 20px 28px 0 11px; display: flex; flex-direction: column; }
.pick { position: relative; flex: none; margin-bottom: 21px; }
.pick select { width: 100%; height: 32px; padding: 0 5px; border: 1px solid #d9dbde; border-radius: 3px; background: #fff; appearance: none; font-size: 12px; }
.pick .caret { position: absolute; right: 12px; top: 13px; border-width: 6px 5px 0; width: 10px; height: 6px; color: #8b8d91; }
.shapes { display: grid; grid-template-columns: repeat(3, minmax(0, 1fr)); grid-auto-rows: 70px; gap: 10px; overflow: hidden; margin-bottom: 18px; color: #78a7df; stroke-width: 3; }
.shapes button { border-radius: 4px; background: #f0f1f3; color: inherit; }
.shapes svg { width: 70px; height: 70px; }
.s { fill: currentColor; stroke: none; }
.c { stroke-dasharray: 9 4 4 5 4 4 9 0; }
.d { stroke-dasharray: 6 3; }
.o { stroke-dasharray: 8 4; stroke-dashoffset: 4; }
.p { stroke-dasharray: 6 4; stroke-dashoffset: 3; }
.q { stroke-dasharray: 7 4; stroke-dashoffset: 3; }
.t { stroke-dasharray: 3 3; }
.w { stroke-dasharray: 10 5; stroke-dashoffset: 5; }
.n { stroke: #a0bfe4; stroke-width: 2; }
.m { stroke-width: 2; }
.panel .bar { position: absolute; right: 7px; top: 72px; height: 481px; background: #dcdcdd; }

.status { flex: none; display: flex; align-items: center; gap: 22px; height: 25px; padding: 2px 19px 0 16px; border-top: 1px solid #dcdde0; background: #fff; font-size: 12px; }
.status .right { margin-left: auto; }
.status button { gap: 4px; font-size: 13px; }
.status .blue { color: #1f74de; }
.status .roll { margin-left: 19px; }
.status .screen { margin-left: 41px; }
.status .lock { margin-left: 41px; color: #222; }

.tip, .ime, .arrow, .watermark { position: absolute; }
.watermark { right: 11px; bottom: 4px; display: flex; align-items: center; gap: 1px; opacity: .8; }
.watermark div { display: flex; flex-direction: column; align-items: flex-end; }
.swirl { width: 40px; height: 40px; stroke: none; }
.watermark strong { font: 700 21px/26px "Noto Sans CJK SC", sans-serif; color: #74b0e4; }
.watermark em { font: 700 17px/19px "Liberation Sans", sans-serif; color: #62bf7c; }
.tip { right: 36px; bottom: 26px; width: 42px; height: 30px; border-radius: 3px; background: rgba(255, 255, 255, .6); line-height: 30px; text-align: center; box-shadow: 0 0 5px rgba(0, 0, 0, .12); }
.arrow { right: 91px; bottom: 28px; width: 124px; height: 116px; stroke: #d8101a; filter: drop-shadow(1px 2px 2px rgba(0, 0, 0, .5)); }
.ime { right: 3px; bottom: 68px; display: flex; align-items: center; justify-content: center; gap: 4px; width: 60px; height: 26px; border-radius: 5px; background: #fff; color: #333; box-shadow: 0 1px 4px rgba(0, 0, 0, .7); font-family: "Liberation Sans", "Noto Sans CJK SC", sans-serif; }
```
